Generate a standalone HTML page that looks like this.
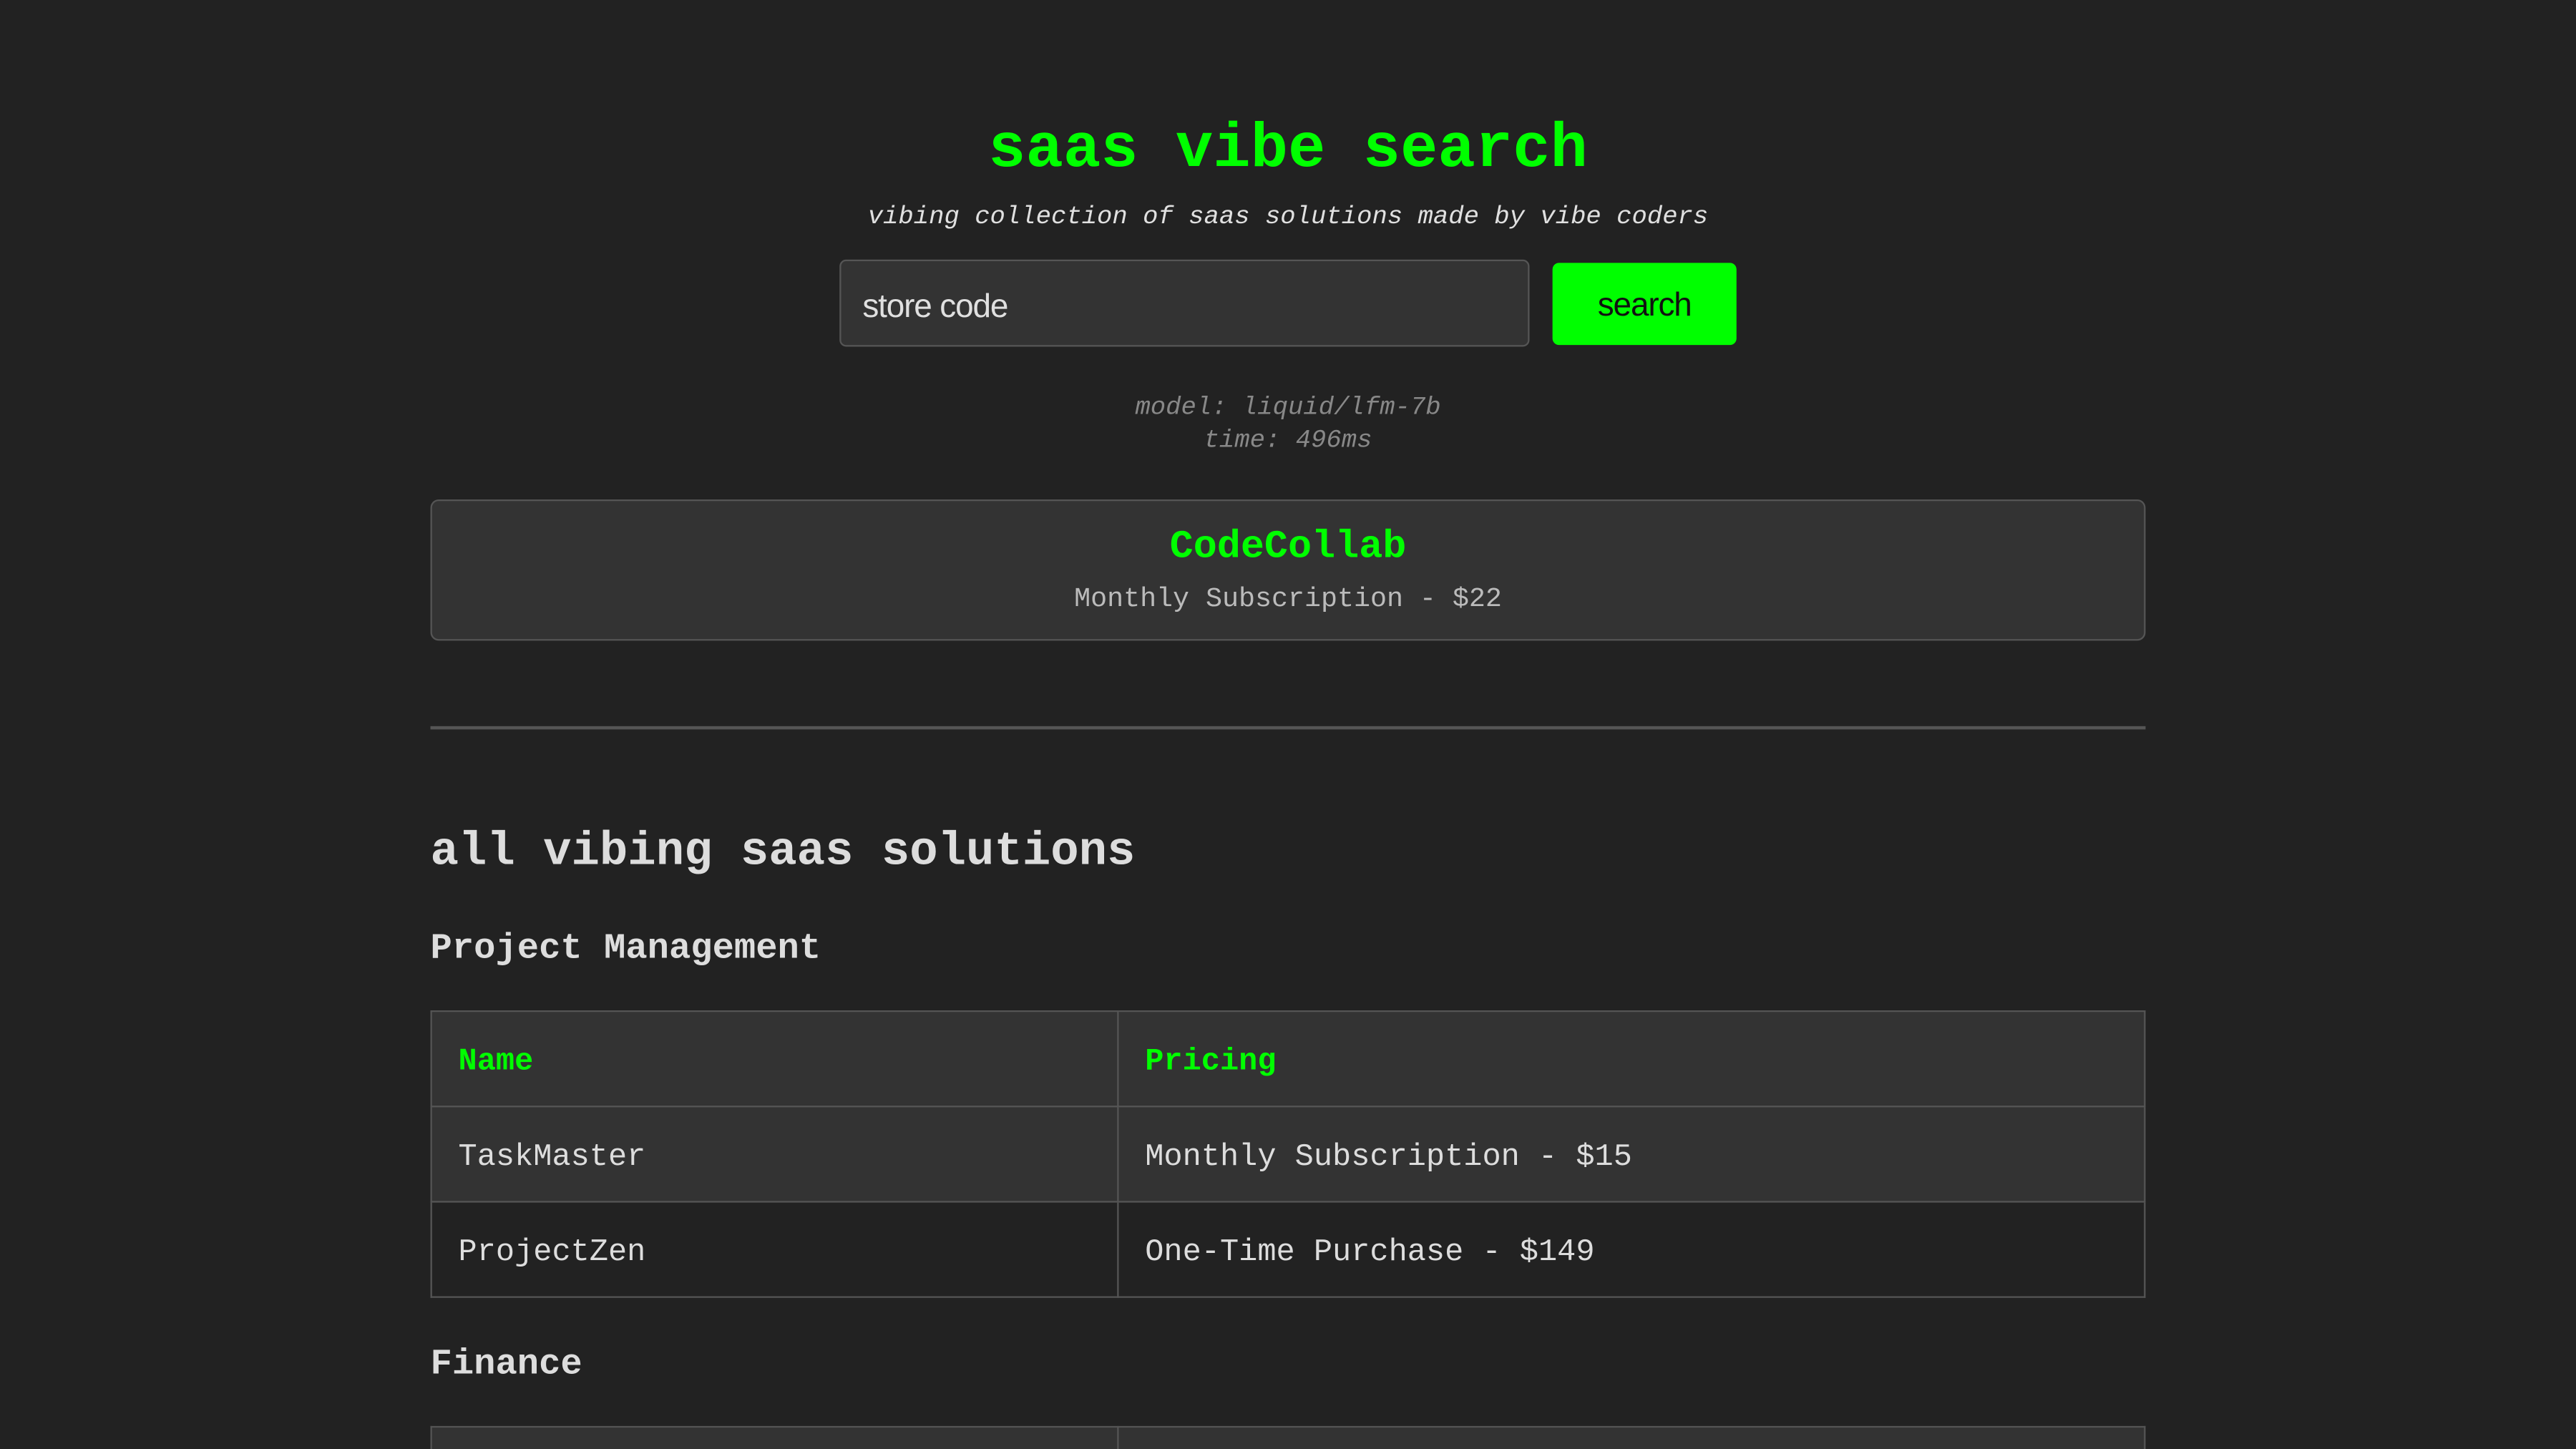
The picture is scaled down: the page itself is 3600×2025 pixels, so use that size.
<!DOCTYPE html>
<html><head><meta charset="utf-8"><style>
html,body{margin:0;padding:0;background:#222;overflow:hidden;width:3600px;height:2025px}
#w{position:absolute;left:0;top:0;width:1568px;height:882px;transform:scale(2.295918);transform-origin:0 0;background:#222;font-family:"Liberation Mono","DejaVu Sans Mono",monospace;color:#ddd;overflow:hidden}
.a{position:absolute;white-space:nowrap}
.c{left:0;width:1568px;text-align:center}
table{position:absolute;left:262px;width:1044px;border-collapse:collapse;font-size:19px}
td,th{border:1px solid #555;height:54px;padding:3px 0 0 16px;text-align:left;font-weight:normal}
th{color:#00ff00;font-weight:bold;background:#333}
</style></head><body><div id="w">
<div class="a c" style="top:69px;line-height:46px;font-size:38px;font-weight:bold;color:#00ff00">saas vibe search</div>
<div class="a c" style="top:122px;line-height:20px;font-size:15.5px;font-style:italic;color:#e0e0e0">vibing collection of saas solutions made by vibe coders</div>
<div class="a" style="left:511px;top:158px;width:418px;height:51px;background:#333;border:1px solid #555;border-radius:4px"></div>
<div class="a" style="left:525px;top:175px;line-height:24px;font-family:'Liberation Sans','DejaVu Sans',sans-serif;font-size:20px;color:#e0e0e0;letter-spacing:-0.5px">store code</div>
<div class="a" style="left:945px;top:160px;width:112px;height:50px;background:#00ff00;border-radius:4px;text-align:center;line-height:53px;font-family:'Liberation Sans','DejaVu Sans',sans-serif;font-size:20px;color:#111;letter-spacing:-0.5px">search</div>
<div class="a c" style="top:238px;line-height:20px;font-size:15.5px;font-style:italic;color:#888">model: liquid/lfm-7b<br>time: 496ms</div>
<div class="a" style="left:262px;top:304px;width:1042px;height:84px;background:#333;border:1px solid #555;border-radius:5px"></div>
<div class="a c" style="top:320px;line-height:28px;font-size:24px;font-weight:bold;color:#00ff00">CodeCollab</div>
<div class="a c" style="top:356px;line-height:20px;font-size:16.7px;color:#bbb">Monthly Subscription - $22</div>
<div class="a" style="left:262px;top:442px;width:1044px;height:2px;background:#555"></div>
<div class="a" style="left:262px;top:502px;line-height:34px;font-size:28.6px;font-weight:bold;color:#ddd">all vibing saas solutions</div>
<div class="a" style="left:262px;top:565px;line-height:26px;font-size:22px;font-weight:bold;color:#ddd">Project Management</div>
<table style="top:615px">
<tr><th style="width:401px">Name</th><th>Pricing</th></tr>
<tr style="background:#333"><td>TaskMaster</td><td>Monthly Subscription - $15</td></tr>
<tr style="background:#222"><td>ProjectZen</td><td>One-Time Purchase - $149</td></tr>
</table>
<div class="a" style="left:262px;top:818px;line-height:26px;font-size:22px;font-weight:bold;color:#ddd">Finance</div>
<table style="top:868px">
<tr><th style="width:401px">Name</th><th>Pricing</th></tr>
</table>
</div></body></html>
